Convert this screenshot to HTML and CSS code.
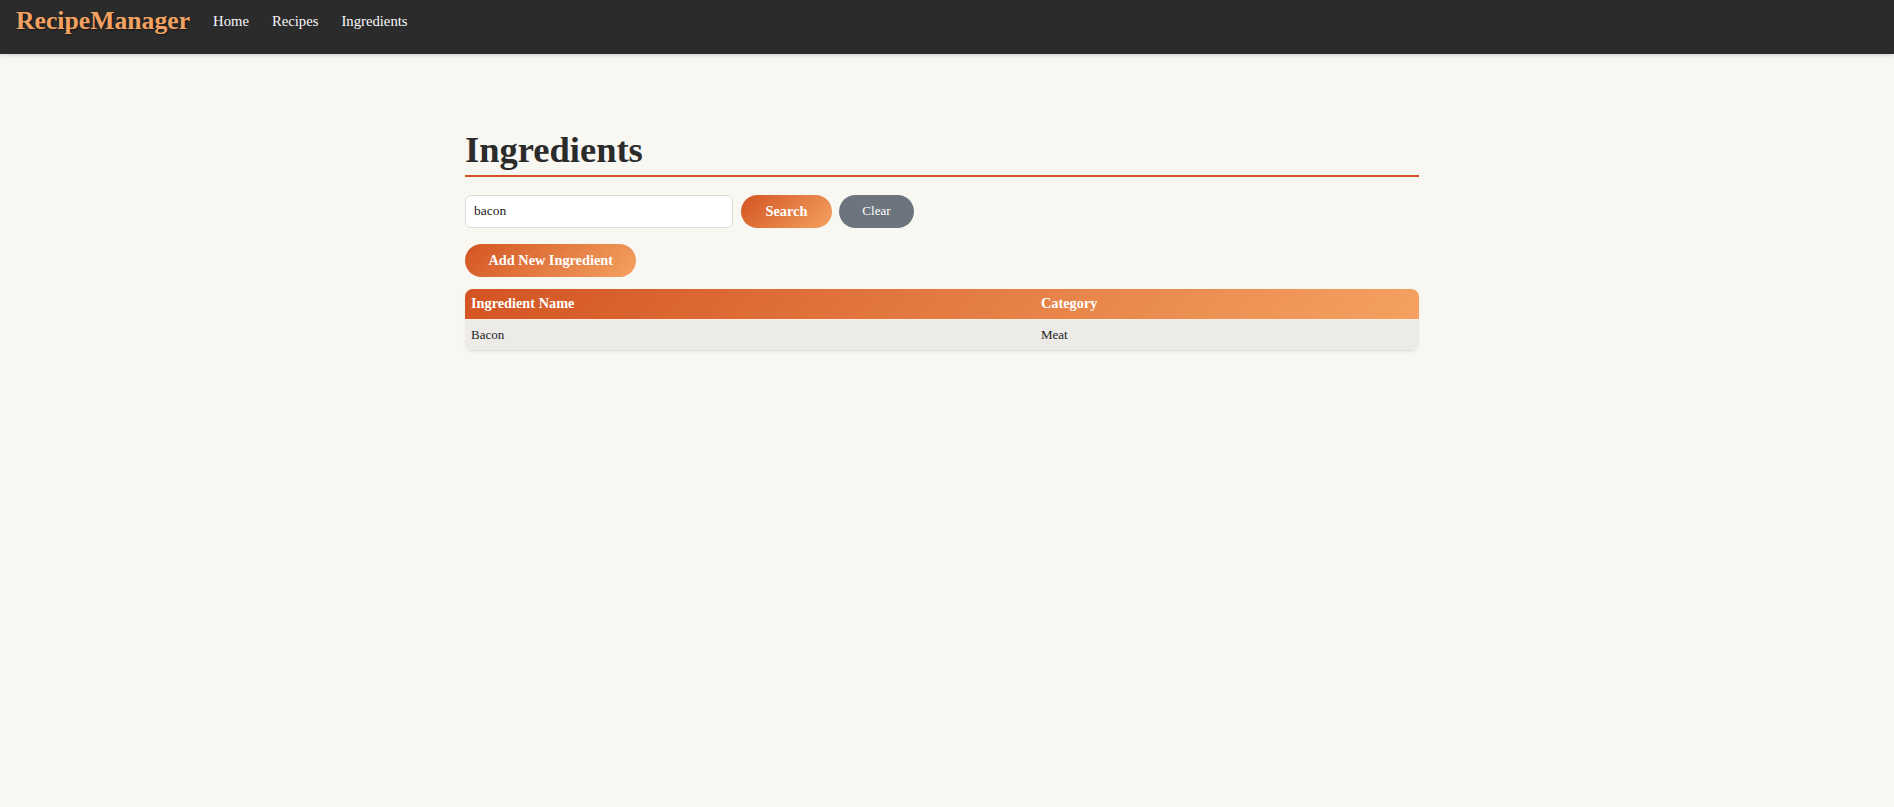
FILE: index.html
```html
<!DOCTYPE html>
<html lang="en">
<head>
<meta charset="utf-8">
<title>Ingredients - RecipeManager</title>
<link rel="stylesheet" href="styles.css">
</head>
<body>
<nav class="navbar">
  <a class="brand" href="#">RecipeManager</a>
  <ul class="nav-links">
    <li><a href="#">Home</a></li>
    <li><a href="#">Recipes</a></li>
    <li><a href="#">Ingredients</a></li>
  </ul>
</nav>
<main class="page">
  <div class="container">
    <h1 class="title">Ingredients</h1>
    <form class="search-row">
      <input class="search-input" type="text" value="bacon">
      <button class="btn btn-primary btn-search" type="button">Search</button>
      <button class="btn btn-secondary" type="button">Clear</button>
    </form>
    <button class="btn btn-primary btn-add" type="button">Add New Ingredient</button>
    <div class="table-wrap">
      <table class="data-table">
        <thead>
          <tr><th class="col-name">Ingredient Name</th><th>Category</th></tr>
        </thead>
        <tbody>
          <tr><td>Bacon</td><td>Meat</td></tr>
        </tbody>
      </table>
    </div>
  </div>
</main>
</body>
</html>
```
FILE: styles.css
```css
* { box-sizing: border-box; }
html, body { margin: 0; padding: 0; }
body {
  background: #f9f7f2;
  font-family: "Liberation Serif", "Times New Roman", serif;
  color: #2b2b2b;
  min-height: 807px;
}
.navbar {
  height: 54px;
  background: #2b2b2b;
  display: flex;
  align-items: center;
  padding: 0 16px 12px 16px;
  box-shadow: 0 2px 4px rgba(0,0,0,0.12);
}
.brand {
  color: #f4a261;
  font-weight: bold;
  font-size: 25.7px;
  text-decoration: none;
  text-shadow: 1px 1px 2px rgba(0,0,0,0.5);
  margin-right: 23px;
}
.nav-links {
  list-style: none;
  margin: 0;
  padding: 0;
  display: flex;
  gap: 23px;
}
.nav-links a {
  color: #f8f9fa;
  text-decoration: none;
  font-size: 14.7px;
}
.page {
  padding-right: 10px;
}
.container {
  max-width: 954px;
  margin: 0 auto;
  padding-top: 74px;
}
.title {
  font-size: 36.5px;
  line-height: 1.2;
  font-weight: bold;
  color: #2b2b2b;
  margin: 0 0 18px 0;
  padding-bottom: 3px;
  border-bottom: 2px solid #d35422;
}
.search-row {
  display: flex;
  align-items: center;
  gap: 7px;
  margin: 0;
}
.search-input {
  width: 268px;
  height: 33px;
  border: 1px solid #dcdcdc;
  border-radius: 6px;
  background: #fff;
  padding: 0 8px;
  font-family: inherit;
  font-size: 13.5px;
  color: #222;
  margin-right: 1px;
}
.btn {
  height: 33px;
  border: none;
  border-radius: 17px;
  font-family: inherit;
  color: #fff;
  cursor: pointer;
}
.btn-primary {
  background: linear-gradient(135deg, #d35422, #f4a261);
  font-weight: bold;
  font-size: 14.3px;
  padding: 0 24.5px;
}
.btn-secondary {
  background: #6c757d;
  font-size: 13px;
  padding: 2px 23.5px 0;
  line-height: 1;
  padding-bottom: 4px;
}
.btn-add {
  display: block;
  margin-top: 16px;
  padding: 0 23.5px;
}
.table-wrap {
  margin-top: 12px;
  border-radius: 8px;
  overflow: hidden;
  box-shadow: 0 1px 3px rgba(0,0,0,0.06);
}
.data-table {
  width: 100%;
  border-collapse: separate;
  border-spacing: 0;
}
.data-table thead tr {
  background: linear-gradient(135deg, #d35422, #f4a261);
}
.data-table th {
  height: 31px;
  text-align: left;
  color: #fff;
  font-weight: bold;
  font-size: 14.3px;
  padding: 0 6px;
  border-bottom: 1px solid #fbefe6;
}
.data-table .col-name { width: 570px; }
.data-table td {
  height: 31px;
  background: #ecebe7;
  font-size: 13px;
  color: #222;
  padding: 0 6px;
  border-bottom: 1px solid #dfe2e6;
}
```
